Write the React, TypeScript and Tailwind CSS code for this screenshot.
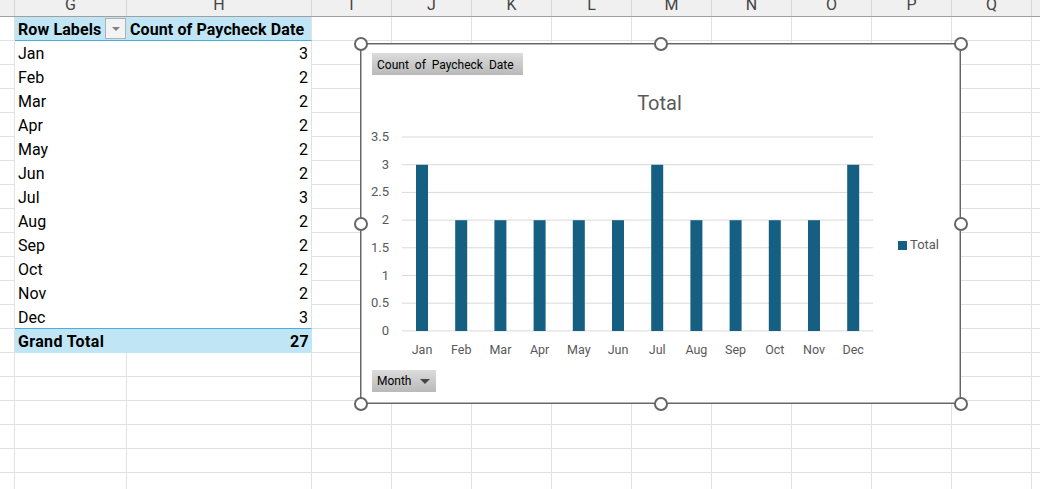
const columns = [
  { name: "I", width: "w-[80px]" },
  { name: "J", width: "w-[80px]" },
  { name: "K", width: "w-[80px]" },
  { name: "L", width: "w-[80px]" },
  { name: "M", width: "w-[80px]" },
  { name: "N", width: "w-[80px]" },
  { name: "O", width: "w-[80px]" },
  { name: "P", width: "w-[80px]" },
  { name: "Q", width: "w-[80px]" },
]

const months: [string, number][] = [
  ["Jan", 3], ["Feb", 2], ["Mar", 2], ["Apr", 2], ["May", 2], ["Jun", 2],
  ["Jul", 3], ["Aug", 2], ["Sep", 2], ["Oct", 2], ["Nov", 2], ["Dec", 3],
]

const ticks = ["3.5", "3", "2.5", "2", "1.5", "1", "0.5", "0"]

const handles = [
  "left-[-7px] top-[-7px]",
  "left-[293px] top-[-7px]",
  "left-[593px] top-[-7px]",
  "left-[-7px] top-[173px]",
  "left-[593px] top-[173px]",
  "left-[-7px] top-[353px]",
  "left-[293px] top-[353px]",
  "left-[593px] top-[353px]",
]

const gridLine = "border-r border-b border-[#e1e1e1]"

function FillerCells() {
  return (
    <>
      {columns.map(c => (
        <div key={c.name} className={`${c.width} shrink-0 h-full ${gridLine}`} />
      ))}
      <div className="flex-1 h-full border-b border-[#e1e1e1]" />
    </>
  )
}

function Row({ children, height = "h-[24px]" }: { children: React.ReactNode; height?: string }) {
  return (
    <div className={`flex ${height}`}>
      <div className={`w-[15px] shrink-0 h-full ${gridLine}`} />
      {children}
      <FillerCells />
    </div>
  )
}

function Plot() {
  return (
    <svg width="530" height="246" className="shrink-0" style={{ fontFamily: "Roboto, sans-serif" }}>
      {ticks.map((t, i) => {
        const y = 16 + i * 27.7
        return (
          <g key={t}>
            <line x1="40" x2="511" y1={y} y2={y} stroke="#d9d9d9" />
            <text x="27" y={y + 4} textAnchor="end" fontSize="13" fill="#595959">{t}</text>
          </g>
        )
      })}
      {months.map(([m, v], i) => {
        const x = 54 + i * 39.2
        const h = v * 55.4
        return (
          <g key={m}>
            <rect x={x} y={210 - h} width="12" height={h} fill="#156082" />
            <text x={x + 6} y="233" textAnchor="middle" fontSize="12.5" fill="#595959">{m}</text>
          </g>
        )
      })}
    </svg>
  )
}

function Chart() {
  return (
    <div className="absolute left-[360px] top-[43px] w-[601px] h-[361px] border border-[#666666] shadow-[inset_0_0_0_1px_#b5b5b5] bg-white box-border">
      <div className="flex flex-col h-full pl-[11px] pt-[9px] text-[12px] text-black">
        <div className="w-[151px] h-[22px] flex items-center pl-[5px] pt-[2px] bg-gradient-to-b from-[#dcdcdc] to-[#b9b9b9] [word-spacing:3px]">
          Count of Paycheck Date
        </div>
        <div className="mt-[10px] h-[36px] -ml-[13px] flex items-center justify-center text-[20px] text-[#595959]">
          Total
        </div>
        <div className="-ml-[10px] flex items-center">
          <Plot />
          <div className="ml-[6px] pt-[2px] flex items-center gap-[3px] text-[13px] text-[#595959]">
            <span className="w-[9px] h-[9px] bg-[#156082]" />
            Total
          </div>
        </div>
        <div className="mt-[3px] w-[64px] h-[22px] flex items-center justify-between pl-[5px] pr-[6px] bg-gradient-to-b from-[#dcdcdc] to-[#b9b9b9]">
          Month
          <span className="w-0 h-0 border-x-[5px] border-x-transparent border-t-[5px] border-t-[#444444]" />
        </div>
      </div>
      {handles.map(h => (
        <span key={h} className={`absolute ${h} w-[14px] h-[14px] rounded-full bg-white border-[2.5px] border-[#666666] box-border`} />
      ))}
    </div>
  )
}

export default function App() {
  return (
    <div className="relative w-[1040px] h-[489px] overflow-hidden bg-white text-black" style={{ fontFamily: "Roboto, sans-serif" }}>

      {/* column letters */}
      <div className="flex h-[17px] bg-[#f0f0f0] border-b border-[#a0a0a0] text-[16px] leading-[10px] text-[#444444] overflow-hidden">
        <div className="w-[15px] shrink-0 border-r border-[#d6d6d6]" />
        <div className="w-[112px] shrink-0 border-r border-[#d6d6d6] text-center">G</div>
        <div className="w-[185px] shrink-0 border-r border-[#d6d6d6] text-center">H</div>
        {columns.map(c => (
          <div key={c.name} className={`${c.width} shrink-0 border-r border-[#d6d6d6] text-center`}>{c.name}</div>
        ))}
      </div>

      {/* pivot header */}
      <Row>
        <div className="w-[297px] shrink-0 h-full flex items-center bg-[#c0e6f5] border-b border-[#45b0e1] border-r border-r-[#e1e1e1] text-[16px] font-bold pl-[3px] tracking-[0.1px]">
          <span className="w-[87px] pt-[2px]">Row Labels</span>
          <span className="w-[21px] h-[21px] mr-[4px] flex items-center justify-center bg-[#f3f3f3] border border-[#b0b0b0]">
            <span className="w-0 h-0 border-x-[4px] border-x-transparent border-t-[4px] border-t-[#808080]" />
          </span>
          <span className="pt-[2px]">Count of Paycheck Date</span>
        </div>
      </Row>

      {/* months */}
      {months.map(([m, v]) => (
        <Row key={m}>
          <div className={`w-[297px] shrink-0 h-full flex items-center justify-between px-[3px] pt-[2px] text-[16px] border-r border-[#e1e1e1] ${m === "Dec" ? "border-b border-b-[#45b0e1]" : ""}`}>
            <span>{m}</span>
            <span>{v}</span>
          </div>
        </Row>
      ))}

      {/* grand total */}
      <Row>
        <div className="w-[297px] shrink-0 h-full flex items-center justify-between px-[3px] pt-[2px] bg-[#c0e6f5] text-[16px] font-bold tracking-[0.35px]">
          <span>Grand Total</span>
          <span>27</span>
        </div>
      </Row>

      {/* empty rows */}
      {Array.from({ length: 6 }).map((_, i) => (
        <Row key={i}>
          <div className={`w-[112px] shrink-0 h-full ${gridLine}`} />
          <div className={`w-[185px] shrink-0 h-full ${gridLine}`} />
        </Row>
      ))}

      <Chart />
    </div>
  )
}
